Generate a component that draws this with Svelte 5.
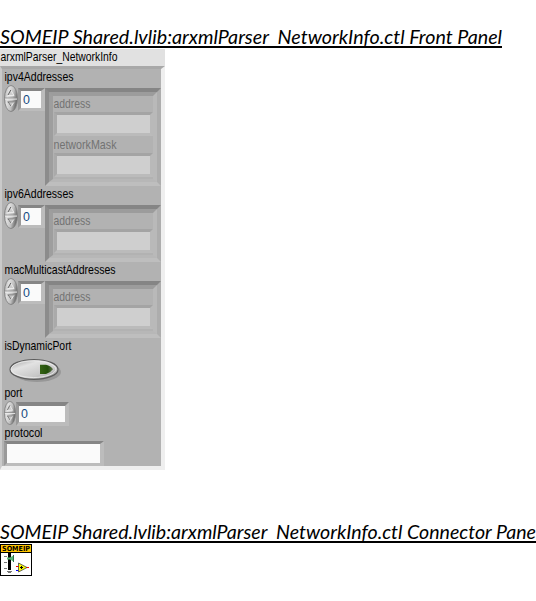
<script>
  const arrays = [
    { name: 'ipv4Addresses', width: 69, fields: [['address', 37], ['networkMask', 63]] },
    { name: 'ipv6Addresses', width: 69, fields: [['address', 37]] },
    { name: 'macMulticastAddresses', width: 111, fields: [['address', 37]] }
  ];
</script>

{#snippet label(text, width, disabled = false)}
  <svg class="label" class:disabled height="16" width={width + 2}>
    <text x="0.5" y="12" textLength={width} lengthAdjust="spacingAndGlyphs">{text}</text>
  </svg>
{/snippet}

{#snippet spinner(width, height)}
  <svg class="spinner" {width} {height} viewBox="0 0 14 27" preserveAspectRatio="none">
    <defs>
      <linearGradient id="metal" x1="0" y1="0" x2="1" y2=".35">
        <stop offset="0" stop-color="#aaa" />
        <stop offset=".35" stop-color="#e0e0e0" />
        <stop offset=".7" stop-color="#c0c0c0" />
        <stop offset="1" stop-color="#707070" />
      </linearGradient>
    </defs>
    <ellipse cx="7" cy="13.5" rx="6.5" ry="13" fill="url(#metal)" stroke="#808080" stroke-width=".9" />
    <path d="M1 13.1H13" stroke="#888" />
    <path d="M1 14.1H13" stroke="#eee" />
    <path d="M4 10.5H10L7 5.5" fill="#ccc" stroke="#eee" stroke-width=".9" />
    <path d="M4 10L6.8 5" fill="none" stroke="#555" stroke-width=".9" />
    <path d="M10 17L7 22L4 17Z" fill="#c4c4c4" stroke="#eee" stroke-width=".9" />
    <path d="M3.5 16.9H10M4.3 17L7 21.5" fill="none" stroke="#666" stroke-width=".9" />
  </svg>
{/snippet}

{#snippet heading(kind, width)}
  <h2>
    <svg width="536" height="30">
      <text x="0" y="23" textLength={width} lengthAdjust="spacingAndGlyphs">SOMEIP Shared.lvlib:arxmlParser_NetworkInfo.ctl {kind}</text>
      <rect x="0" y="25" {width} height="2" />
    </svg>
  </h2>
{/snippet}

<main>
  {@render heading('Front Panel', 502)}
  <section class="control">
    <div class="caption">{@render label('arxmlParser_NetworkInfo', 117)}</div>
    <div class="cluster">
      {#each arrays as array}
        <div class="group">
          {@render label(array.name, array.width)}
          <div class="array">
            {@render spinner(14, 27)}
            <div class="input index"><span>0</span></div>
            <div class="frame">
              <div class="inner">
                {#each array.fields as [name, width]}
                  <div class="element">
                    {@render label(name, width, true)}
                    <div class="string"></div>
                  </div>
                {/each}
              </div>
            </div>
          </div>
        </div>
      {/each}
      <div class="group toggle">
        {@render label('isDynamicPort', 67)}
        <svg class="switch" width="58" height="28" viewBox="0 0 58 28">
          <defs>
            <linearGradient id="button" x1="0" y1="0" x2=".8" y2="1">
              <stop offset="0" stop-color="#999" />
              <stop offset=".35" stop-color="#e2e2e2" />
              <stop offset=".75" stop-color="#c8c8c8" />
              <stop offset="1" stop-color="#999" />
            </linearGradient>
            <linearGradient id="led">
              <stop offset="0" stop-color="#356315" />
              <stop offset=".6" stop-color="#24500b" />
              <stop offset="1" stop-color="#60714e" />
            </linearGradient>
          </defs>
          <ellipse cx="33" cy="18" rx="24" ry="10" fill="#888" opacity=".65" />
          <ellipse cx="30" cy="15.4" rx="24" ry="9.9" fill="url(#button)" stroke="#5c5c5c" stroke-width="1.2" />
          <ellipse cx="29.5" cy="15.2" rx="22.3" ry="8.3" fill="none" stroke="#eee" stroke-width=".8" />
          <path d="M36 10.7H42Q47 11.7 49 15.2Q46 19.2 42 20H36Z" fill="url(#led)" />
        </svg>
      </div>
      <div class="group port">
        {@render label('port', 18)}
        <div class="numeric">
          {@render spinner(12, 24)}
          <div class="input value"><span>0</span></div>
        </div>
      </div>
      <div class="group">
        {@render label('protocol', 38)}
        <div class="input protocol"></div>
      </div>
    </div>
  </section>
  <div class="gap"></div>
  {@render heading('Connector Pane', 536)}
  <svg class="vi" width="32" height="32" viewBox="0 0 32 32">
    <g shape-rendering="crispEdges">
      <rect width="32" height="32" fill="#000" />
      <rect x="1" y="1" width="30" height="7" fill="#ffc400" />
      <rect x="1" y="9" width="30" height="22" fill="#fff" />
      <path d="M4 12.5H7M4 18.5H7M4 24.5H7" stroke="#777" />
      <rect x="8" y="9" width="3" height="17" />
      <path d="M7 27H12V28H11V29H8V28H7Z" fill="#777" />
      <path d="M16 22.5H19" stroke="#f00" />
      <path d="M16 26.5H19" stroke="#00f" />
      <path d="M26 23.5H29" stroke="#f00" />
    </g>
    <text x="2" y="7" textLength="28" lengthAdjust="spacingAndGlyphs">SOMEIP</text>
    <path d="M7 13.5H10L13.5 11.5V17.5L10 15.5H7Z" fill="#58b878" />
    <path d="M13.5 11V18" stroke="#2f7048" />
    <path d="M18.5 19L27 23.5L18.5 28Z" fill="#ff0" stroke="#444" stroke-width=".8" />
    <path d="M20 23.5H23M21.5 22V25" stroke="#000" />
  </svg>
</main>

<style>
  :global(body) { margin: 0; background: #fff; }
  main { width: 536px; height: 601px; overflow: hidden; padding-top: 21px; box-sizing: border-box; }
  svg { display: block; flex: none; }
  h2 { margin: 0; height: 28px; font: italic 18.5px "Lato", sans-serif; }
  .label { font: 12.4px "Liberation Sans", sans-serif; overflow: visible; fill: #000; }
  .label.disabled { fill: #727272; }
  .control { width: 165px; }
  .caption { height: 17px; background: #e1e1e1; }
  .cluster {
    height: 404px; box-sizing: border-box; background: #b2b2b2;
    border: solid; border-width: 3px 4px 4px 2px;
    border-color: #a8a8a8 #efefef #efefef #cacaca; padding-left: 2px;
  }
  .group { display: flex; flex-direction: column; }
  .array { display: flex; margin-top: 3px; align-items: flex-start; }
  .array :global(.spinner) { margin-top: -3px; }
  .input {
    box-sizing: border-box; border: 3px solid;
    border-color: #858585 #bcbcbc #bcbcbc #999;
    background: #fafafa; color: #174a80;
    font: 12.4px/17px "Liberation Sans", sans-serif;
  }
  .input span { display: block; padding-left: 2px; }
  .index { width: 27px; height: 23px; border-right-width: 4px; }
  .index span { margin-top: 1px; height: 16px; }
  .frame {
    width: 116px; box-sizing: border-box; border: 4px solid;
    border-color: #858585 #adadad #bebebe #8c8c8c; background: #b2b2b2;
  }
  .inner {
    border: 4px solid; border-color: #9c9c9c #b9b9b9 #b7b7b7 #9e9e9e;
    border-bottom-width: 3px; padding: 0 0 1px 0;
  }
  .element { height: 41px; }
  .element :global(.label) { margin-left: 0; }
  .string {
    height: 24px; margin-left: 1px; box-sizing: border-box; border: 3px solid;
    border-color: #a4a4a4 #b9b9b9 #bbb #aaa; background: #cfcfcf;
  }
  .group:has(.array) { height: 76px; }
  .group:first-child { height: 117px; }
  .toggle { height: 47px; }
  .port { height: 40px; }
  .numeric { display: flex; align-items: flex-start; }
  .value { width: 53px; height: 24px; margin-top: 1px; border-width: 4px 4px 4px 3px; }
  .protocol { width: 100px; height: 25px; border-width: 3px 4px 3px 3px; }
  .gap { height: 46px; }
  .vi { font: bold 7px "DejaVu Sans", sans-serif; }
</style>
